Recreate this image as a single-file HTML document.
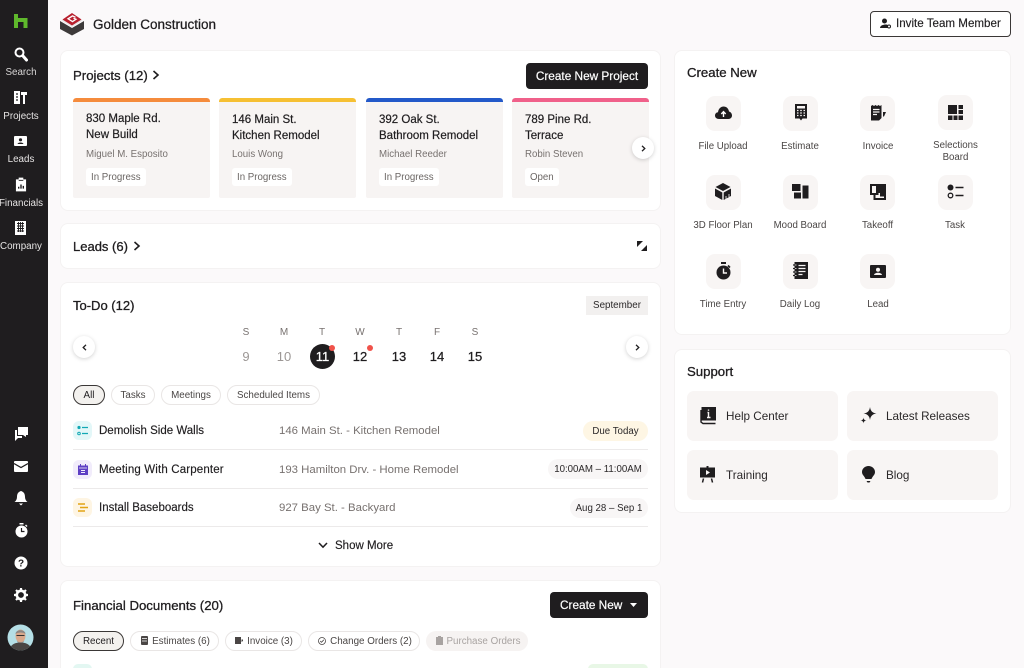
<!DOCTYPE html>
<html><head><meta charset="utf-8"><title>Golden Construction</title>
<style>
*{box-sizing:border-box}
html,body{margin:0;padding:0;width:1024px;height:668px;overflow:hidden;background:#fbf9fa;font-family:"Liberation Sans",sans-serif;color:#1f1d1f}
#root{position:relative;width:1024px;height:668px;overflow:hidden;background:#fbf9fa}
.a{position:absolute}
.t{position:absolute;white-space:nowrap;line-height:20px;height:20px}
.card{position:absolute;background:#fff;border:1px solid #f4f2f2;border-radius:8px}
.side{position:absolute;left:0;top:0;width:48px;height:668px;background:#1f1d1f}
.sl{position:absolute;left:21px;transform:translateX(-50%);color:#e6e4e4;font-size:9.8px;line-height:14px;white-space:nowrap}
svg{position:absolute;display:block}
.h{font-size:13.2px;color:#1f1d1f;-webkit-text-stroke:.3px #1f1d1f}
.pc{position:absolute;top:98px;width:137px;height:100px;background:#f7f4f3;border-radius:3px 3px 2px 2px;overflow:hidden}
.pc i{position:absolute;left:0;top:0;width:100%;height:4px;border-radius:3px 3px 0 0}
.pc b{position:absolute;left:13px;font-weight:400;font-size:11.5px;line-height:16px;white-space:nowrap;color:#1f1d1f;-webkit-text-stroke:.2px #1f1d1f}
.pc span{position:absolute;left:13px;top:50px;font-size:9.7px;line-height:14px;color:#77716f;white-space:nowrap}
.pc em{position:absolute;left:13px;top:70px;height:18px;background:#fff;border-radius:3px;font-style:normal;font-size:9.7px;line-height:19px;color:#6b6664;padding:0 5px;white-space:nowrap}
.btn{position:absolute;background:#1f1d1f;color:#fff;border-radius:4px;font-size:11.8px;line-height:26px;height:26px;text-align:center;white-space:nowrap;-webkit-text-stroke:.2px #fff}
.ic{position:absolute;width:35px;height:35px;background:#f8f5f4;border-radius:9px}
.il{position:absolute;transform:translateX(-50%);text-align:center;font-size:9.7px;line-height:11.5px;color:#4a4645;white-space:nowrap}
.sup{position:absolute;width:151px;height:50px;background:#f8f5f4;border-radius:7px}
.sup span{position:absolute;left:39px;top:16px;font-size:11.7px;line-height:20px;color:#2b2829;white-space:nowrap}
.pill{position:absolute;height:20px;border:1px solid #e9e6e5;border-radius:10px;font-size:9.8px;line-height:20px;color:#4a4645;text-align:center;white-space:nowrap;background:#fff}
.pill.on{background:#f3f1ee;border:1px solid #3a3736;color:#1f1d1f}
.dw{position:absolute;transform:translateX(-50%);font-size:10px;color:#77716f;line-height:14px}
.dn{position:absolute;transform:translateX(-50%);font-size:13px;line-height:18px;color:#1f1d1f;-webkit-text-stroke:.25px #1f1d1f}
.rt{position:absolute;left:99px;font-size:11.5px;line-height:16px;color:#1f1d1f;white-space:nowrap;-webkit-text-stroke:.15px #1f1d1f}
.rs{position:absolute;left:279px;font-size:11.4px;line-height:16px;color:#77716f;white-space:nowrap}
.rp{position:absolute;height:20px;border-radius:10px;background:#f8f6f6;font-size:9.7px;line-height:21px;text-align:center;color:#2b2829;white-space:nowrap}
.rowi{position:absolute;left:73px;width:19px;height:19px;border-radius:6px}
.hr{position:absolute;left:73px;width:575px;height:1px;background:#eceaea}
.rnd{position:absolute;width:22px;height:22px;border-radius:50%;background:#fff;box-shadow:0 1px 4px rgba(0,0,0,.18)}
</style></head><body>
<div id="root">

<div class="side">
<svg style="left:14px;top:14px" width="14" height="14" viewBox="0 0 14 14"><path d="M0 0H4V4H13.500V14H9.500V8H4V14H0Z" fill="#5fb82c"/></svg>
<svg style="left:14px;top:47px" width="14" height="15" viewBox="0 0 14 15"><circle cx="5.500" cy="5.500" r="4" fill="none" stroke="#fff" stroke-width="2"/><path d="M9 9L12.500 13" stroke="#fff" stroke-width="3" stroke-linecap="round"/></svg>
<div class="sl" style="top:66px;color:#d8d6d6">Search</div>
<svg style="left:14px;top:91px" width="13" height="13" viewBox="0 0 13 13"><path d="M0 0H6V13H0Z" fill="#fff"/><path d="M2 3H4M2 6H4M2 9H4" stroke="#1f1d1f" stroke-width="1.300"/><path d="M7 1H13V4H11V13H9V4H7Z" fill="#fff"/></svg>
<div class="sl" style="top:110px">Projects</div>
<svg style="left:14px;top:136px" width="13" height="11" viewBox="0 0 13 11"><rect width="13" height="10" rx="1" fill="#fff"/><circle cx="6.500" cy="3.800" r="1.600" fill="#1f1d1f"/><path d="M3.500 8C3.800 6 9.200 6 9.500 8Z" fill="#1f1d1f"/></svg>
<div class="sl" style="top:153px">Leads</div>
<svg style="left:15px;top:177px" width="12" height="15" viewBox="0 0 13 15"><path d="M1 2H4V0H9V2H12V15H1Z" fill="#fff"/><path d="M4 3H9" stroke="#1f1d1f"/><path d="M4 12V10M6.500 12V7.500M9 12V9" stroke="#1f1d1f" stroke-width="1.500"/></svg>
<div class="sl" style="top:197px">Financials</div>
<svg style="left:15px;top:221px" width="11" height="14" viewBox="0 0 11 14"><path d="M0 0H11V14H0Z" fill="#fff"/><path d="M2 2.500H9M2 5H9M2 7.500H9M2 10H9M3.500 1V11M5.500 1V11M7.500 1V11" stroke="#1f1d1f" stroke-width=".9"/></svg>
<div class="sl" style="top:240px">Company</div>

<svg style="left:14px;top:426px" width="15" height="15" viewBox="0 0 15 15"><path d="M4 1H14V9H12V11L9 9H4Z" fill="#fff"/><path d="M1 4H3V10H8V12H4L1 15Z" fill="#fff"/></svg>
<svg style="left:14px;top:461px" width="14" height="11" viewBox="0 0 14 11"><rect width="14" height="11" rx="1" fill="#fff"/><path d="M0 2.500L7 6.500L14 2.500" fill="none" stroke="#1f1d1f" stroke-width="1.200"/></svg>
<svg style="left:14px;top:491px" width="14" height="15" viewBox="0 0 14 15"><path d="M7 0C4 1 3 3 3 6C3 8 2 10 0.500 11H13.500C12 10 11 8 11 6C11 3 10 1 7 0Z" fill="#fff"/><path d="M5 12.500H9L7 14.500Z" fill="#fff"/></svg>
<svg style="left:15px;top:523px" width="13" height="15" viewBox="0 0 13 15"><circle cx="6.500" cy="8.500" r="6" fill="#fff"/><rect x="4.500" y="0" width="4" height="1.500" fill="#fff"/><path d="M10.500 2L12 3.500" stroke="#fff" stroke-width="1.400"/><path d="M6.500 5V8.500H9.500" stroke="#1f1d1f" stroke-width="1.200" fill="none"/></svg>
<svg style="left:14px;top:556px" width="14" height="14" viewBox="0 0 14 14"><circle cx="7" cy="7" r="6.500" fill="#fff"/><text x="7" y="10.500" text-anchor="middle" font-size="10" font-weight="700" font-family="Liberation Sans" fill="#1f1d1f">?</text></svg>
<svg style="left:14px;top:588px" width="14" height="14" viewBox="0 0 14 14"><circle cx="7" cy="7" r="4.200" fill="none" stroke="#fff" stroke-width="2.600"/><path d="M7 0V3M7 11V14M0 7H3M11 7H14M2 2L4 4M10 10L12 12M12 2L10 4M4 10L2 12" stroke="#fff" stroke-width="2.200"/></svg>
<svg style="left:7px;top:624px" width="27" height="27" viewBox="0 0 27 27"><defs><clipPath id="av"><circle cx="13.500" cy="13.500" r="13"/></clipPath></defs><circle cx="13.500" cy="13.500" r="13" fill="#b5dfe6"/><g clip-path="url(#av)"><path d="M2 27C3 20 9 18.500 13.500 18.500C18 18.500 24 20 25 27Z" fill="#4a4644"/><ellipse cx="13.500" cy="12" rx="5" ry="6.500" fill="#d9a98c"/><path d="M8.500 10C8.500 5 18.500 5 18.500 10C16 8 11 8 8.500 10Z" fill="#8c8886"/><path d="M9.500 11.500H17.500" stroke="#333" stroke-width="1"/><path d="M9.500 16C11 19 16 19 17.500 16L16 18.800H11Z" fill="#8a8482"/></g></svg>
</div>

<!-- logo -->
<svg style="left:60px;top:12px" width="24" height="24" viewBox="0 0 24 24"><path d="M0 9L12 16L24 9V17L12 23.500L0 17Z" fill="#3d3a3a"/><path d="M1.500 8.500L12 2L22.500 8.500L12 15Z" fill="#e9e7e7"/><path d="M2.500 7.500L12 1L21.500 7.500L12 13.500Z" fill="#b8202e"/><path d="M15.500 5.300L12.500 3.900L8 6.800L12.500 9.600L16 7.300L13.500 6.200" fill="none" stroke="#fff" stroke-width="1.300"/></svg>
<div class="t" style="left:93px;top:15px;font-size:13.5px;-webkit-text-stroke:.25px #1f1d1f">Golden Construction</div>
<div class="a" style="left:870px;top:11px;width:141px;height:26px;border:1px solid #3a3736;border-radius:4px;background:#fff"></div>
<svg style="left:880px;top:18px" width="11" height="11" viewBox="0 0 11 11"><circle cx="4.500" cy="3" r="2.500" fill="#1f1d1f"/><path d="M0 10C0 6.500 7 6 7.500 7V10Z" fill="#1f1d1f"/><circle cx="9" cy="8.500" r="1.500" fill="none" stroke="#1f1d1f"/></svg>
<div class="t" style="left:896px;top:14px;font-size:11.6px;-webkit-text-stroke:.15px #1f1d1f">Invite Team Member</div>

<!-- Projects -->
<div class="card" style="left:60px;top:50px;width:601px;height:161px"></div>
<div class="t h" style="left:73px;top:66px">Projects (12)</div>
<svg style="left:152px;top:70px" width="8" height="10" viewBox="0 0 8 10"><path d="M1.500 1L6 5L1.500 9" fill="none" stroke="#1f1d1f" stroke-width="1.600"/></svg>
<div class="btn" style="left:526px;top:63px;width:122px">Create New Project</div>

<div class="pc" style="left:73px"><i style="background:#f58b3c"></i><b style="top:13px">830 Maple Rd.</b><b style="top:29px">New Build</b><span>Miguel M. Esposito</span><em>In Progress</em></div>
<div class="pc" style="left:219px"><i style="background:#f6c033"></i><b style="top:14px">146 Main St.</b><b style="top:30px">Kitchen Remodel</b><span>Louis Wong</span><em>In Progress</em></div>
<div class="pc" style="left:366px"><i style="background:#2359c9"></i><b style="top:14px">392 Oak St.</b><b style="top:30px">Bathroom Remodel</b><span>Michael Reeder</span><em>In Progress</em></div>
<div class="pc" style="left:512px"><i style="background:#f0608a"></i><b style="top:14px">789 Pine Rd.</b><b style="top:30px">Terrace</b><span>Robin Steven</span><em>Open</em></div>
<div class="rnd" style="left:632px;top:137px"></div>
<svg style="left:641px;top:145px" width="5" height="7" viewBox="0 0 5 7"><path d="M1 .8L3.800 3.500L1 6.200" fill="none" stroke="#1f1d1f" stroke-width="1.300"/></svg>

<!-- Leads -->
<div class="card" style="left:60px;top:223px;width:601px;height:46px"></div>
<div class="t h" style="left:73px;top:237px;font-size:13px">Leads (6)</div>
<svg style="left:133px;top:241px" width="8" height="10" viewBox="0 0 8 10"><path d="M1.500 1L6 5L1.500 9" fill="none" stroke="#1f1d1f" stroke-width="1.600"/></svg>
<svg style="left:637px;top:241px" width="10" height="10" viewBox="0 0 10 10"><path d="M0 0H6L0 6Z" fill="#1f1d1f"/><path d="M10 10H4L10 4Z" fill="#1f1d1f"/></svg>

<!-- To-Do -->
<div class="card" style="left:60px;top:282px;width:601px;height:285px"></div>
<div class="t h" style="left:73px;top:296px;font-size:13px">To-Do (12)</div>
<div class="a" style="left:586px;top:296px;width:62px;height:19px;background:#f2f0ef;font-size:9.8px;line-height:20px;text-align:center;color:#2b2829">September</div>
<div class="rnd" style="left:73px;top:336px"></div>
<svg style="left:82px;top:344px" width="5" height="7" viewBox="0 0 5 7"><path d="M4 .8L1.200 3.500L4 6.200" fill="none" stroke="#1f1d1f" stroke-width="1.300"/></svg>
<div class="rnd" style="left:626px;top:336px"></div>
<svg style="left:635px;top:344px" width="5" height="7" viewBox="0 0 5 7"><path d="M1 .8L3.800 3.500L1 6.200" fill="none" stroke="#1f1d1f" stroke-width="1.300"/></svg>

<div class="dw" style="left:246px;top:326px">S</div><div class="dw" style="left:284px;top:326px">M</div><div class="dw" style="left:322px;top:326px">T</div><div class="dw" style="left:360px;top:326px">W</div><div class="dw" style="left:399px;top:326px">T</div><div class="dw" style="left:437px;top:326px">F</div><div class="dw" style="left:475px;top:326px">S</div>
<div class="dn" style="left:246px;top:348px;color:#9c9795;-webkit-text-stroke:0">9</div>
<div class="dn" style="left:284px;top:348px;color:#9c9795;-webkit-text-stroke:0">10</div>
<div class="a" style="left:310px;top:344px;width:25px;height:25px;border-radius:50%;background:#1f1d1f"></div>
<div class="dn" style="left:322.500px;top:348px;color:#fff;-webkit-text-stroke:.25px #fff">11</div>
<div class="a" style="left:329px;top:345px;width:6px;height:6px;border-radius:50%;background:#f0524a"></div>
<div class="dn" style="left:360px;top:348px">12</div>
<div class="a" style="left:367px;top:345px;width:6px;height:6px;border-radius:50%;background:#f0524a"></div>
<div class="dn" style="left:399px;top:348px">13</div>
<div class="dn" style="left:437px;top:348px">14</div>
<div class="dn" style="left:475px;top:348px">15</div>

<div class="pill on" style="left:73px;top:385px;width:32px">All</div>
<div class="pill" style="left:111px;top:385px;width:44px">Tasks</div>
<div class="pill" style="left:161px;top:385px;width:60px">Meetings</div>
<div class="pill" style="left:227px;top:385px;width:93px">Scheduled Items</div>

<div class="rowi" style="top:421px;background:#e3f7f8"></div>
<svg style="left:77px;top:425px" width="11" height="11" viewBox="0 0 11 11"><circle cx="2" cy="2.500" r="1.600" fill="#12a8b4"/><circle cx="2" cy="8.500" r="1.300" fill="none" stroke="#12a8b4"/><path d="M5 2.500H11M5 8.500H11" stroke="#12a8b4" stroke-width="1.200"/></svg>
<div class="rt" style="top:423px">Demolish Side Walls</div>
<div class="rs" style="top:423px">146 Main St. - Kitchen Remodel</div>
<div class="rp" style="left:583px;top:421px;width:65px;background:#fef6e4">Due Today</div>
<div class="hr" style="top:449px"></div>

<div class="rowi" style="top:460px;background:#f1ecfb"></div>
<svg style="left:78px;top:464px" width="10" height="11" viewBox="0 0 10 11"><path d="M0 1.500H2V0H3V1.500H7V0H8V1.500H10V11H0Z" fill="#5d3fc4"/><path d="M1 4H9" stroke="#f1ecfb" stroke-width=".8"/><path d="M3 6.500H7M3 8.500H7" stroke="#f1ecfb" stroke-width="1"/></svg>
<div class="rt" style="top:462px;letter-spacing:.15px">Meeting With Carpenter</div>
<div class="rs" style="top:462px">193 Hamilton Drv. - Home Remodel</div>
<div class="rp" style="left:548px;top:459px;width:100px">10:00AM – 11:00AM</div>
<div class="hr" style="top:488px"></div>

<div class="rowi" style="top:498px;background:#fef5e3"></div>
<svg style="left:77px;top:503px" width="11" height="9" viewBox="0 0 11 9"><path d="M1 1H8M3 4.500H11M1 8H8" stroke="#e2a415" stroke-width="1.500"/></svg>
<div class="rt" style="top:500px">Install Baseboards</div>
<div class="rs" style="top:500px">927 Bay St. - Backyard</div>
<div class="rp" style="left:570px;top:498px;width:78px">Aug 28 – Sep 1</div>
<div class="hr" style="top:526px"></div>

<svg style="left:318px;top:542px" width="10" height="7" viewBox="0 0 10 7"><path d="M1 1L5 5.200L9 1" fill="none" stroke="#1f1d1f" stroke-width="1.500"/></svg>
<div class="t" style="left:335px;top:536px;font-size:11.5px;-webkit-text-stroke:.15px #1f1d1f">Show More</div>

<!-- Financial -->
<div class="card" style="left:60px;top:580px;width:601px;height:100px"></div>
<div class="t h" style="left:73px;top:596px">Financial Documents (20)</div>
<div class="btn" style="left:550px;top:592px;width:98px;text-align:left;padding-left:10px">Create New</div>
<svg style="left:630px;top:603px" width="7" height="4" viewBox="0 0 7 4"><path d="M0 0H7L3.500 4Z" fill="#fff"/></svg>
<div class="pill on" style="left:73px;top:631px;width:51px">Recent</div>
<div class="pill" style="left:130px;top:631px;width:89px;padding-left:13px">Estimates (6)</div>
<svg style="left:141px;top:636px" width="7" height="9" viewBox="0 0 7 9"><rect width="7" height="9" rx="1" fill="#4a4645"/><path d="M1 2.500H6M1 5H6" stroke="#fff" stroke-width=".7"/></svg>
<div class="pill" style="left:225px;top:631px;width:77px;padding-left:13px">Invoice (3)</div>
<svg style="left:235px;top:637px" width="8" height="7" viewBox="0 0 8 7"><path d="M0 0H6V7H0Z" fill="#4a4645"/><path d="M6.500 2.500H8V4L6.500 5Z" fill="#4a4645"/></svg>
<div class="pill" style="left:308px;top:631px;width:112px;padding-left:14px">Change Orders (2)</div>
<svg style="left:318px;top:637px" width="8" height="8" viewBox="0 0 8 8"><circle cx="4" cy="4" r="3.500" fill="none" stroke="#4a4645" stroke-width=".8"/><path d="M2.200 4L3.500 5.300L5.800 2.800" fill="none" stroke="#4a4645" stroke-width=".8"/></svg>
<div class="pill" style="left:426px;top:631px;width:102px;height:20px;border:0;background:#f6f3f2;color:#a8a3a1;line-height:22px;padding-left:13px">Purchase Orders</div>
<svg style="left:436px;top:636px" width="7" height="9" viewBox="0 0 7 9"><path d="M0 1H2V0H5V1H7V9H0Z" fill="#a8a3a1"/></svg>
<div class="a" style="left:73px;top:664px;width:19px;height:10px;border-radius:6px;background:#e3f7f2"></div>
<div class="a" style="left:588px;top:664px;width:60px;height:10px;border-radius:8px;background:#e8f7e6"></div>

<!-- Create New -->
<div class="card" style="left:674px;top:50px;width:337px;height:285px"></div>
<div class="t h" style="left:687px;top:63px;font-size:13.2px">Create New</div>

<div class="ic" style="left:706px;top:96px"></div><div class="ic" style="left:783px;top:96px"></div><div class="ic" style="left:860px;top:96px"></div><div class="ic" style="left:938px;top:95px"></div>
<div class="ic" style="left:706px;top:175px"></div><div class="ic" style="left:783px;top:175px"></div><div class="ic" style="left:860px;top:175px"></div><div class="ic" style="left:938px;top:175px"></div>
<div class="ic" style="left:706px;top:254px"></div><div class="ic" style="left:783px;top:254px"></div><div class="ic" style="left:860px;top:254px"></div>

<svg style="left:715px;top:106px" width="17" height="14" viewBox="0 0 17 14"><path d="M4 13C1.500 13 0 11.500 0 9.500C0 7.500 1.500 6.300 3 6.200C3.500 2.500 6 0.500 8.500 0.500C11.500 0.500 13.500 2.500 14 5.500C15.800 6 17 7.500 17 9.500C17 11.500 15.500 13 13.500 13Z" fill="#1f1d1f"/><path d="M8.500 11V6M6.300 8L8.500 5.600L10.700 8" fill="none" stroke="#fff" stroke-width="1.400"/></svg>
<svg style="left:795px;top:104px" width="12" height="17" viewBox="0 0 12 17"><path d="M0 0H12V14.500H7.500L6 16.500L4.500 14.500H0Z" fill="#1f1d1f"/><rect x="2" y="2" width="8" height="2.500" fill="#f8f5f4"/><path d="M2 6.500H3.500M5.200 6.500H6.800M8.500 6.500H10M2 9H3.500M5.200 9H6.800M8.500 9H10M2 11.500H3.500M5.200 11.500H6.800M8.500 11.500H10" stroke="#f8f5f4" stroke-width="1.300"/></svg>
<svg style="left:871px;top:105px" width="15" height="16" viewBox="0 0 15 16"><path d="M0 1L1.500 0L3 1L4.500 0L6 1L7.500 0L9 1L10.500 0V13L8 15.500H0Z" fill="#1f1d1f"/><path d="M2 4.500H8.500M2 7H8.500M2 9.500H6" stroke="#f8f5f4" stroke-width="1.200"/><path d="M12 7H15L13 11.500H12Z" fill="#1f1d1f"/></svg>
<svg style="left:948px;top:105px" width="15" height="15" viewBox="0 0 15 15"><rect width="9" height="9" fill="#1f1d1f"/><rect x="10.500" width="4.500" height="4" fill="#1f1d1f"/><rect x="10.500" y="5" width="4.500" height="4" fill="#1f1d1f"/><rect y="10.500" width="4.500" height="4.500" fill="#1f1d1f"/><rect x="5.500" y="10.500" width="4" height="4.500" fill="#1f1d1f"/><rect x="10.500" y="10.500" width="4.500" height="4.500" fill="#1f1d1f"/></svg>

<svg style="left:715px;top:183px" width="16" height="17" viewBox="0 0 16 17"><path d="M8 0L15.500 4L8 8L0.500 4Z" fill="#1f1d1f"/><path d="M0 5.500L7.300 9.500V17L0 13Z" fill="#1f1d1f"/><path d="M16 5.500L8.700 9.500V17L16 13Z" fill="#1f1d1f"/><path d="M11 13V16M14 11V14" stroke="#f8f5f4" stroke-width=".8"/></svg>
<svg style="left:792px;top:184px" width="17" height="15" viewBox="0 0 17 15"><rect width="8.500" height="7" fill="#1f1d1f"/><rect x="2" y="8.500" width="7" height="6" fill="#1f1d1f"/><rect x="10.500" y="1.500" width="6" height="13" fill="#1f1d1f"/></svg>
<svg style="left:870px;top:184px" width="16" height="16" viewBox="0 0 16 16"><path d="M0 0H16V16H3.500V11H0Z" fill="#1f1d1f"/><path d="M2 2H6V9H2Z" fill="#f8f5f4"/><path d="M5.500 11H8.500V9H10V12.500H5.500Z" fill="#f8f5f4"/><path d="M5.500 12.500H14V14H5.500Z" fill="#f8f5f4"/></svg>
<svg style="left:947px;top:184px" width="17" height="15" viewBox="0 0 17 15"><circle cx="3.500" cy="3.500" r="3" fill="#1f1d1f"/><circle cx="3.500" cy="11.500" r="2.300" fill="none" stroke="#1f1d1f" stroke-width="1.300"/><path d="M8.500 3.500H16.500M8.500 11.500H16.500" stroke="#1f1d1f" stroke-width="1.600"/></svg>

<svg style="left:716px;top:262px" width="15" height="18" viewBox="0 0 15 18"><rect x="5" y="0" width="5" height="2" fill="#1f1d1f"/><circle cx="7.500" cy="10.500" r="7" fill="#1f1d1f"/><path d="M12 3.500L14 5.500" stroke="#1f1d1f" stroke-width="1.600"/><path d="M7.500 6.500V11H11" fill="none" stroke="#f8f5f4" stroke-width="1.400"/></svg>
<svg style="left:793px;top:262px" width="15" height="17" viewBox="0 0 15 17"><path d="M1.500 0H15V17H1.500Z" fill="#1f1d1f"/><path d="M0 3H3M0 6.500H3M0 10H3M0 13.500H3" stroke="#1f1d1f" stroke-width="1.200"/><path d="M2 3H3.500M2 6.500H3.500M2 10H3.500M2 13.500H3.500" stroke="#f8f5f4" stroke-width=".7"/><path d="M5.500 3.500H12.500M5.500 6.500H12.500M5.500 9.500H12.500M5.500 12.500H9.500" stroke="#f8f5f4" stroke-width="1.200"/></svg>
<svg style="left:870px;top:265px" width="16" height="13" viewBox="0 0 16 13"><rect width="16" height="13" rx="1" fill="#1f1d1f"/><circle cx="8" cy="4.700" r="2" fill="#f8f5f4"/><path d="M4 10C4.500 7 11.500 7 12 10Z" fill="#f8f5f4"/></svg>

<div class="il" style="left:723px;top:141px">File Upload</div><div class="il" style="left:800px;top:141px">Estimate</div><div class="il" style="left:878px;top:141px">Invoice</div><div class="il" style="left:955.500px;top:140px">Selections<br>Board</div>
<div class="il" style="left:723px;top:220px">3D Floor Plan</div><div class="il" style="left:800px;top:220px">Mood Board</div><div class="il" style="left:877.500px;top:220px">Takeoff</div><div class="il" style="left:955px;top:220px">Task</div>
<div class="il" style="left:723px;top:299px">Time Entry</div><div class="il" style="left:800px;top:299px">Daily Log</div><div class="il" style="left:878px;top:299px">Lead</div>

<!-- Support -->
<div class="card" style="left:674px;top:349px;width:337px;height:164px"></div>
<div class="t h" style="left:687px;top:362px;font-size:13.2px">Support</div>
<div class="sup" style="left:687px;top:391px"><span>Help Center</span></div>
<div class="sup" style="left:847px;top:391px"><span>Latest Releases</span></div>
<div class="sup" style="left:687px;top:450px"><span>Training</span></div>
<div class="sup" style="left:847px;top:450px"><span>Blog</span></div>
<svg style="left:700px;top:407px" width="17" height="18" viewBox="0 0 17 18"><path d="M1.500 0H16V13.500H1.500Z" fill="#1f1d1f"/><path d="M1 3V15L3 16.500H15.500" fill="none" stroke="#1f1d1f" stroke-width="1.400"/><path d="M8.500 5V10M7 10.500H10.500M7.500 5.500H8.500M8.500 2.500V3.800" stroke="#f8f5f4" stroke-width="1.400" fill="none"/></svg>
<svg style="left:860px;top:407px" width="17" height="17" viewBox="0 0 17 17"><path d="M10 0C10.500 4 12.500 6 16.500 6.500C12.500 7 10.500 9 10 13C9.500 9 7.500 7 3.500 6.500C7.500 6 9.500 4 10 0Z" fill="#1f1d1f"/><path d="M3.500 10.500C3.700 12.500 4.500 13.300 6.500 13.500C4.500 13.700 3.700 14.500 3.500 16.500C3.300 14.500 2.500 13.700 .5 13.500C2.500 13.300 3.300 12.500 3.500 10.500Z" fill="#1f1d1f"/></svg>
<svg style="left:700px;top:466px" width="15" height="17" viewBox="0 0 15 17"><path d="M0 1.500H6.500V0H8.500V1.500H15V11.500H0Z" fill="#1f1d1f"/><path d="M6 4L10 6.500L6 9Z" fill="#f8f5f4"/><path d="M3.500 12.500L2.500 16.500M11.500 12.500L12.500 16.500" stroke="#1f1d1f" stroke-width="1.500"/></svg>
<svg style="left:862px;top:466px" width="13" height="17" viewBox="0 0 13 17"><path d="M6.500 0C10 0 13 2.500 13 6C13 9 10.500 10 9.500 13H3.500C2.500 10 0 9 0 6C0 2.500 3 0 6.500 0Z" fill="#1f1d1f"/><path d="M4.500 15H8.500L7.500 16.500H5.500Z" fill="#1f1d1f"/></svg>
</div>
</body></html>
